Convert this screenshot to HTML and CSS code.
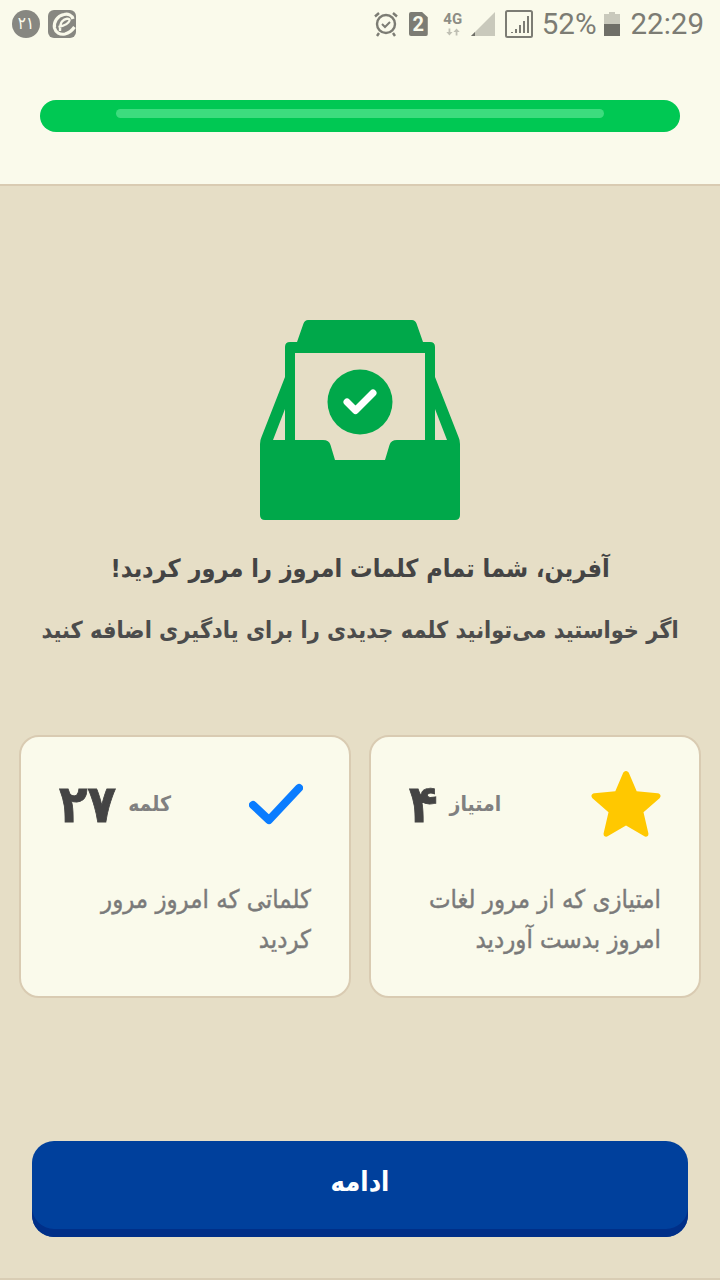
FILE: index.html
```html
<!DOCTYPE html>
<html lang="fa">
<head>
<meta charset="utf-8">
<title>مرور لغات</title>
<link rel="stylesheet" href="styles.css">
</head>
<body>
<header class="top">
  <div class="status">
    <div class="status-left">
      <span class="badge">۲۱</span>
      <svg class="app" viewBox="0 0 28 28"><rect width="28" height="28" rx="6" fill="#878781"/><path d="M25 9C24 5 20 3.500 16 4.500C9 6 5.500 12 6.500 18C7.500 22.500 12 25 17 24C21 23 24 20.500 26.500 17" fill="none" stroke="#f9f9ea" stroke-width="3.200"/><path d="M10.500 17C15 16 20.500 14 21.500 10.500C21.800 8 17 8 14 11.500C12 14 12 17 12 21" fill="none" stroke="#f9f9ea" stroke-width="2.400"/></svg>
    </div>
    <div class="status-right">
      <svg class="ic-alarm" viewBox="0 0 24 26"><circle cx="12" cy="13" r="9" fill="none" stroke="#7c7c74" stroke-width="2.400"/><path d="M8 13l3 3 5-5" fill="none" stroke="#7c7c74" stroke-width="2"/><path d="M1 5.500l4-3.500M23 5.500l-4-3.500M5 22l-2 3M19 22l2 3" stroke="#7c7c74" stroke-width="2.400" fill="none"/></svg>
      <span class="sim">2</span>
      <span class="net"><b>4G</b><svg class="arrows" viewBox="0 0 18 8"><path d="M6 0v4h2.500L5 8 1.500 4H4V0zM13 0l3.500 4H14v4h-2V4H9.500z" fill="#c0c0b4"/></svg></span>
      <svg class="ic-sig" viewBox="0 0 24 24"><path d="M24 0V24H0Z" fill="#c9c9bc"/><path d="M0 24L4 20V24Z" fill="#6f6f68"/></svg>
      <svg class="ic-wifi" viewBox="0 0 28 28"><rect x="1" y="1" width="26" height="26" rx="1.500" fill="none" stroke="#7c7c74" stroke-width="2"/><path d="M6 22h2v1H6zM10 19h2v4h-2zM14 15h2v8h-2zM18 11h2v12h-2zM22 6h2v17h-2z" fill="#7c7c74"/></svg>
      <span class="pct">52%</span>
      <svg class="ic-bat" viewBox="0 0 16 24"><path d="M5 0h6v2h5v22H0V2h5z" fill="#c9c9bc"/><rect y="12" width="16" height="12" fill="#6f6f68"/></svg>
      <span class="clock">22:29</span>
    </div>
  </div>
  <div class="progress"><div class="shine"></div></div>
</header>

<main class="content">
  <svg class="tray" viewBox="0 0 200 200" aria-hidden="true">
    <path fill="#00a84a" fill-rule="evenodd" d="M37 22L43.500 3.500Q44.800 0 48 0H152Q155.200 0 156.500 3.500L163 22H170Q175 22 175 27V57L198.500 117Q200 120 200 124V195Q200 200 195 200H5Q0 200 0 195V124Q0 120 1.500 117L25 57V27Q25 22 30 22ZM35 33V120H63Q69 120 70.500 125L75 140H125L129.500 125Q131 120 137 120H165V33ZM25 89L13 120H25ZM175 89V120H187Z"/>
    <circle cx="100" cy="82" r="32.500" fill="#00a84a"/>
    <path d="M87 82L95.500 90.500L113 73" fill="none" stroke="#fff" stroke-width="7" stroke-linecap="round" stroke-linejoin="round"/>
  </svg>
  <h1 class="title">آفرین، شما تمام کلمات امروز را مرور کردید!</h1>
  <p class="subtitle">اگر خواستید می‌توانید کلمه جدیدی را برای یادگیری اضافه کنید</p>

  <div class="cards">
    <section class="card">
      <div class="card-head">
        <svg class="star" viewBox="0 2 72 68"><path d="M36 2C37.500 2 38.500 3 39 4.200L47 23L68.500 25C71.500 25.300 72.500 28 70.500 30L54 44.500L59 66C59.500 69 57 70.500 54.500 69L36 58L17.500 69C15 70.500 12.500 69 13 66L18 44.500L1.500 30C-0.500 28 0.500 25.300 3.500 25L25 23L33 4.200C33.500 3 34.500 2 36 2Z" fill="#ffc800"/></svg>
        <div class="stat"><span class="stat-label">امتیاز</span><span class="stat-num">۴</span></div>
      </div>
      <p class="card-text">امتیازی که از مرور لغات امروز بدست آوردید</p>
    </section>
    <section class="card">
      <div class="card-head">
        <svg class="check" viewBox="0 0 54 42"><path d="M4 22L20 37L50 5" fill="none" stroke="#0a7cff" stroke-width="8" stroke-linecap="round" stroke-linejoin="round"/></svg>
        <div class="stat"><span class="stat-label">کلمه</span><span class="stat-num">۲۷</span></div>
      </div>
      <p class="card-text">کلماتی که امروز مرور کردید</p>
    </section>
  </div>

  <button class="cta" type="button">ادامه</button>
</main>
</body>
</html>
```

FILE: styles.css
```css
* { box-sizing: border-box; }
html, body { margin: 0; padding: 0; }
body {
  width: 720px;
  height: 1280px;
  overflow: hidden;
  display: flex;
  flex-direction: column;
  background: #e6dec6;
  font-family: "DejaVu Sans Condensed", "DejaVu Sans", sans-serif;
  border-bottom: 2px solid #d9cdb4;
}
.top {
  height: 186px;
  flex: none;
  background: #fafaeb;
  border-bottom: 2px solid #d9cbb2;
  padding-top: 8px;
}
.status {
  height: 32px;
  display: flex;
  justify-content: space-between;
  align-items: center;
  padding: 0 16px 0 12px;
  direction: ltr;
}
.status-left, .status-right { display: flex; align-items: center; }
.status-left { gap: 8px; }
.badge {
  width: 28px;
  height: 28px;
  border-radius: 50%;
  background: #878781;
  color: #fafaeb;
  font-size: 17px;
  line-height: 27px;
  text-align: center;
}
.app { width: 28px; height: 28px; }
.ic-alarm { width: 24px; height: 26px; margin-right: 11px; }
.sim {
  width: 19px;
  height: 24px;
  margin-right: 15px;
  background: #7c7c74;
  border-radius: 2px;
  clip-path: polygon(0 0, 70% 0, 100% 22%, 100% 100%, 0 100%);
  color: #fafaeb;
  font: bold 20px/25px "Roboto", sans-serif;
  text-align: center;
}
.net {
  width: 20px;
  margin-right: 8px;
  display: flex;
  flex-direction: column;
  align-items: center;
  gap: 2px;
  font-family: "Roboto", sans-serif;
  color: #8d8d85;
}
.net b { font-size: 15px; line-height: 13px; }
.arrows { width: 16px; height: 8px; }
.ic-sig { width: 24px; height: 24px; margin-right: 10px; }
.ic-wifi { width: 28px; height: 28px; margin-right: 9px; }
.pct, .clock {
  font-family: "Roboto", sans-serif;
  font-size: 29.5px;
  line-height: 32px;
  color: #7c7c74;
}
.ic-bat { width: 16px; height: 24px; margin: 0 11px 0 7px; }
.progress {
  height: 32px;
  margin: 60px 40px 0;
  padding: 9px 76px 0;
  border-radius: 16px;
  background: #00c853;
}
.shine { height: 9px; border-radius: 5px; background: #3ddc7e; }
.content {
  flex: 1;
  display: flex;
  flex-direction: column;
  align-items: center;
  padding-top: 134px;
  direction: rtl;
}
.tray { width: 200px; height: 200px; flex: none; }
.title {
  margin: 29px 0 0;
  font-size: 25px;
  line-height: 40px;
  font-weight: bold;
  color: #444;
}
.subtitle {
  margin: 21px 0 0;
  font-size: 23.3px;
  line-height: 40px;
  font-weight: bold;
  color: #4c4c4c;
  white-space: nowrap;
}
.cards {
  width: 682px;
  margin-top: 85px;
  display: flex;
  gap: 18px;
}
.card {
  flex: 1;
  height: 263px;
  padding: 30px 38px 0;
  background: #fafaeb;
  border: 2px solid #d9cbb2;
  border-radius: 20px;
}
.card-head {
  height: 74px;
  display: flex;
  align-items: center;
  justify-content: space-between;
}
.star { width: 70px; height: 68px; }
.check { width: 54px; height: 42px; margin-right: 8px; }
.stat { display: flex; align-items: center; gap: 12px; }
.stat-label { font-size: 21px; font-weight: bold; color: #808080; }
.stat-num {
  font-size: 52px;
  line-height: 60px;
  font-weight: bold;
  color: #444;
  -webkit-text-stroke: 0.8px #444;
}
.card-text {
  margin: 38px 0 0;
  font-size: 25.5px;
  line-height: 40px;
  color: #7a7a7a;
  -webkit-text-stroke: 0.4px #7a7a7a;
}
.cta {
  width: 656px;
  height: 96px;
  margin-top: 143px;
  padding: 0 0 16px;
  border: 0;
  border-radius: 22px;
  background: #00409c;
  box-shadow: inset 0 -8px 0 #002f88;
  color: #fff;
  font-family: inherit;
  font-size: 27px;
  font-weight: bold;
}
```
